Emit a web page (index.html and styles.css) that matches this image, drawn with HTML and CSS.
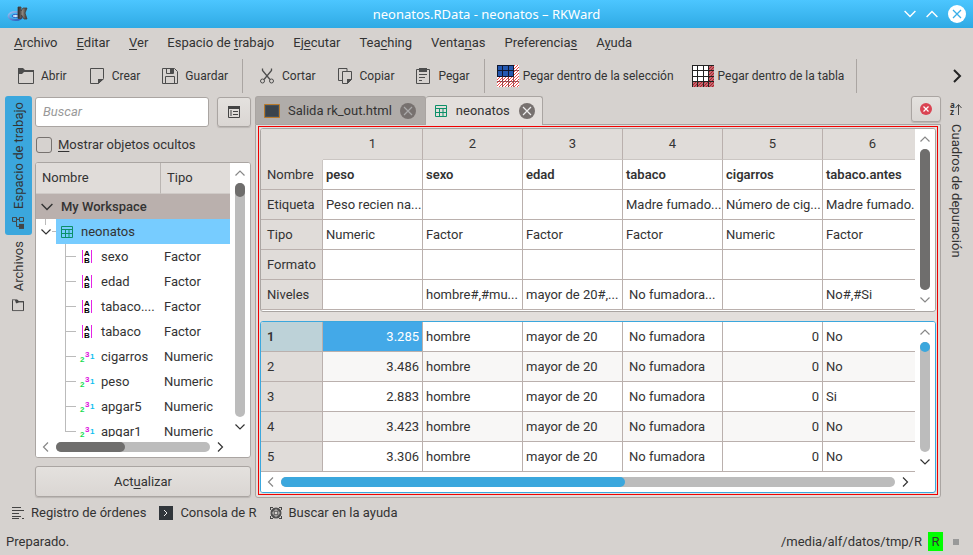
FILE: index.html
```html
<!DOCTYPE html>
<html lang="es">
<head>
<meta charset="utf-8">
<title>neonatos.RData - neonatos – RKWard</title>
<link rel="stylesheet" href="styles.css">
</head>
<body>
<svg class="defs" aria-hidden="true">
  <symbol id="up" viewBox="0 0 10 10"><path d="M.5 7.5L5 3l4.500 4.500" fill="none" stroke="currentColor" stroke-width="1.200"/></symbol>
  <symbol id="down" viewBox="0 0 10 10"><path d="M.5 2.500L5 7l4.500-4.500" fill="none" stroke="currentColor" stroke-width="1.200"/></symbol>
  <symbol id="left" viewBox="0 0 10 10"><path d="M7 .5L2.500 5 7 9.500" fill="none" stroke="currentColor" stroke-width="1.200"/></symbol>
  <symbol id="right" viewBox="0 0 10 10"><path d="M3 .5L7.500 5 3 9.500" fill="none" stroke="currentColor" stroke-width="1.200"/></symbol>
  <symbol id="folder" viewBox="0 0 16 16"><path d="M.5 2v13.500h15V3.500H8" fill="none" stroke="#4d4d4d"/><path d="M0 0h5l2 2h9v2H6L4 6H0z" fill="#4d4d4d"/></symbol>
  <symbol id="new" viewBox="0 0 16 16"><path d="M1.500.5h13v10l-5 5h-8z" fill="none" stroke="#4d4d4d"/><path d="M9 16v-5h6z" fill="#4d4d4d"/></symbol>
  <symbol id="save" viewBox="0 0 16 16"><path d="M.5.500h12l3 3v12H.5zM3.500 15V8.500h9V15M4.500 1v4.500h7V1" fill="none" stroke="#4d4d4d"/><path d="M8 1h3v4H8z" fill="#4d4d4d"/></symbol>
  <symbol id="cut" viewBox="0 0 16 16"><path d="M3.500.5v2L11 11.500M12.500.5v2L5 11.500" fill="none" stroke="#4d4d4d" stroke-width="1.300"/><circle cx="3.500" cy="13" r="2" fill="none" stroke="#4d4d4d"/><circle cx="12.500" cy="13" r="2" fill="none" stroke="#4d4d4d"/></symbol>
  <symbol id="copy" viewBox="0 0 16 16"><path d="M5.500 12.500h-4V.5H10v3M5.500 3.500h9v8l-4 4h-5z" fill="none" stroke="#4d4d4d"/><path d="M10 16v-5h5z" fill="#4d4d4d"/></symbol>
  <symbol id="paste" viewBox="0 0 16 16"><path d="M1.500 1.500h13v14h-13z" fill="none" stroke="#4d4d4d"/><path d="M4 0h8v4H4zM4 6h8v1H4zM4 9h6v1H4zM4 12h3v1H4z" fill="#4d4d4d"/></symbol>
  <symbol id="sheet" viewBox="0 0 12 12"><path d="M.5.5h11v11H.5zM1 3.500h10M1 7.500h10M4.500 3.500v8M8 3.500v8" fill="none" stroke="#0c9069"/></symbol>
  <symbol id="factor" viewBox="0 0 16 16"><path d="M3 1h1v13H3zM12 1h1v13h-1z" fill="#e424e4"/><text x="8" y="7" text-anchor="middle" class="glyph">A</text><text x="8" y="14" text-anchor="middle" class="glyph">B</text></symbol>
  <symbol id="numeric" viewBox="0 0 16 16"><text x="1" y="13" class="glyph green">2</text><text x="6" y="8" class="glyph pink">3</text><text x="11" y="10" class="glyph cyan">1</text></symbol>
  <symbol id="close" viewBox="0 0 16 16"><circle cx="8" cy="8" r="8" fill="#77716f"/><path d="M4 4l8 8M12 4l-8 8" stroke="currentColor" stroke-width="1.200"/></symbol>
  <symbol id="tree" viewBox="0 0 12 12"><path d="M.5.500h4v4h-4zM7.500.500h4v4h-4zM4.500 2.500h3M4.500 4.500v5H7" fill="none" stroke="#444"/><path d="M7 7h5v5H7z" fill="#444"/></symbol>
  <symbol id="files" viewBox="0 0 12 12"><path d="M.5 1v10.500h11V2.500H6" fill="none" stroke="#444"/><path d="M0 0h5l2 2h5v1H7L5 4H4L3 1H0z" fill="#444"/></symbol>
</svg>

<header class="titlebar">
  <svg class="logo" viewBox="0 0 22 16">
    <defs>
      <linearGradient id="disc" x1="0" y1="0" x2="1" y2="1"><stop offset="0" stop-color="#9cc4f2"/><stop offset="1" stop-color="#1d50b8"/></linearGradient>
      <linearGradient id="metal" x1="0" y1="0" x2="1" y2="0"><stop offset="0" stop-color="#222"/><stop offset=".5" stop-color="#8b8580"/><stop offset="1" stop-color="#333"/></linearGradient>
    </defs>
    <ellipse cx="8.500" cy="10" rx="7" ry="4" fill="none" stroke="url(#disc)" stroke-width="2"/><ellipse cx="8.500" cy="10" rx="3.500" ry="1.500" fill="#d5eafc" stroke="#2b5cc0"/><path d="M11 1h3v4l2-3h4l-2 5 2 6h-3l-2.500-4v3.500H11z" fill="url(#metal)" stroke="#48403c" stroke-width=".8"/>
  </svg>
  <h1>neonatos.RData - neonatos – RKWard</h1>
  <div class="window-buttons">
    <button aria-label="Minimizar"><svg class="s12"><use href="#down"/></svg></button>
    <button aria-label="Maximizar"><svg class="s12"><use href="#up"/></svg></button>
    <button aria-label="Cerrar"><svg class="s18" viewBox="0 0 18 18"><circle cx="9" cy="9" r="9" fill="#fff"/><path d="M5 5l8 8M13 5l-8 8" stroke="#38aee8" stroke-width="1.300"/></svg></button>
  </div>
</header>

<nav class="menubar">
  <button><u>A</u>rchivo</button><button><u>E</u>ditar</button><button><u>V</u>er</button><button>Espacio de <u>t</u>rabajo</button><button>Ej<u>e</u>cutar</button><button>Tea<u>c</u>hing</button><button>Venta<u>n</u>as</button><button>Preferencia<u>s</u></button><button>A<u>y</u>uda</button>
</nav>

<div class="toolbar">
  <div class="group">
    <button><svg class="s16"><use href="#folder"/></svg>Abrir</button>
    <button><svg class="s16"><use href="#new"/></svg>Crear</button>
    <button><svg class="s16"><use href="#save"/></svg>Guardar</button>
  </div>
  <div class="group">
    <button><svg class="s16"><use href="#cut"/></svg>Cortar</button>
    <button><svg class="s16"><use href="#copy"/></svg>Copiar</button>
    <button><svg class="s16"><use href="#paste"/></svg>Pegar</button>
  </div>
  <div class="group wide">
    <button><svg class="s22" viewBox="0 0 22 22"><defs><pattern id="hatch" width="3" height="3" patternUnits="userSpaceOnUse"><rect width="3" height="3" fill="#fff"/><path d="M0 3L3 0M-1 1L1 -1M2 4L4 2" stroke="#f04848" stroke-width="1"/></pattern></defs><path d="M0 0h22v22H0z" fill="url(#hatch)"/><path d="M0 0h17v11H0z" fill="#2458b0"/><path d="M0 .5h17M0 5.500h17M0 11.500h17M.5 0v11M5.500 0v11M11.500 0v11M16.500 0v11" stroke="#101830"/><path d="M0 16.500h22M5.500 11v11M11.500 11v11M16.500 11v11M17 5.500h5" stroke="#702028" opacity=".7"/></svg>Pegar dentro de la selección</button>
    <button><svg class="s22" viewBox="0 0 22 22"><defs><pattern id="hatch-dark" width="3" height="3" patternUnits="userSpaceOnUse"><rect width="3" height="3" fill="#c89090"/><path d="M0 3L3 0M-1 1L1 -1M2 4L4 2" stroke="#b01828" stroke-width="1.200"/></pattern></defs><path d="M0 0h22v22H0z" fill="url(#hatch-dark)"/><path d="M0 0h17v17H0z" fill="#fff"/><path d="M0 .5h22M0 5.500h22M0 11.500h22M0 16.500h22M.5 0v22M5.500 0v22M11.500 0v22M16.500 0v22" stroke="#222"/></svg>Pegar dentro de la tabla</button>
  </div>
  <button class="more" aria-label="Más"><svg class="s14" viewBox="0 0 14 14"><path d="M4 1l6 6-6 6" fill="none" stroke="#222" stroke-width="2"/></svg></button>
</div>

<main class="workspace">
  <nav class="side left">
    <button class="active"><svg class="s12"><use href="#tree"/></svg>Espacio de trabajo</button>
    <button><svg class="s12"><use href="#files"/></svg>Archivos</button>
  </nav>

  <aside class="browser">
    <div class="search">
      <input type="text" placeholder="Buscar" aria-label="Buscar">
      <button class="raised" aria-label="Opciones"><svg class="s12" viewBox="0 0 12 12"><path d="M.5.5h11v11H.5zM3 4v6" fill="none" stroke="#444"/><path d="M0 0h12v3H0zM5 5h5v1H5zM5 8h5v1H5z" fill="#444"/></svg></button>
    </div>
    <label class="hidden-toggle"><input type="checkbox"><span><u>M</u>ostrar objetos ocultos</span></label>
    <div class="objects">
      <div class="view">
        <table>
          <colgroup><col class="name"><col></colgroup>
          <thead><tr><th>Nombre</th><th>Tipo</th></tr></thead>
          <tbody>
            <tr class="root"><td colspan="2"><div class="item"><svg class="s12"><use href="#down"/></svg>My Workspace</div></td></tr>
            <tr><td colspan="2"><div class="item object"><span class="expander"><svg class="s10"><use href="#down"/></svg></span><span class="chosen"><svg class="s12"><use href="#sheet"/></svg>neonatos</span></div></td></tr>
            <tr><td><div class="item leaf"><svg class="s16"><use href="#factor"/></svg>sexo</div></td><td>Factor</td></tr>
            <tr><td><div class="item leaf"><svg class="s16"><use href="#factor"/></svg>edad</div></td><td>Factor</td></tr>
            <tr><td><div class="item leaf"><svg class="s16"><use href="#factor"/></svg>tabaco....</div></td><td>Factor</td></tr>
            <tr><td><div class="item leaf"><svg class="s16"><use href="#factor"/></svg>tabaco</div></td><td>Factor</td></tr>
            <tr><td><div class="item leaf"><svg class="s16"><use href="#numeric"/></svg>cigarros</div></td><td>Numeric</td></tr>
            <tr><td><div class="item leaf"><svg class="s16"><use href="#numeric"/></svg>peso</div></td><td>Numeric</td></tr>
            <tr><td><div class="item leaf"><svg class="s16"><use href="#numeric"/></svg>apgar5</div></td><td>Numeric</td></tr>
            <tr><td><div class="item leaf last"><svg class="s16"><use href="#numeric"/></svg>apgar1</div></td><td>Numeric</td></tr>
          </tbody>
        </table>
      </div>
      <div class="scroll vertical"><button class="end" aria-label="Subir"><svg class="s10"><use href="#up"/></svg></button><div class="track"><div class="thumb short"></div></div><button aria-label="Bajar"><svg class="s10"><use href="#down"/></svg></button></div>
      <div class="scroll horizontal"><button class="end" aria-label="Izquierda"><svg class="s10"><use href="#left"/></svg></button><div class="track"><div class="thumb part"></div></div><button aria-label="Derecha"><svg class="s10"><use href="#right"/></svg></button></div>
    </div>
    <button class="raised update">Act<u>u</u>alizar</button>
  </aside>

  <section class="documents">
    <div class="tabs">
      <div class="tab"><svg class="s16" viewBox="0 0 16 16"><path d="M.5 1.500h15v13H.5z" fill="#45505a" stroke="#b97a2b"/><path d="M2 3h12v10H2z" fill="#3a434c"/></svg><a href="#salida">Salida rk_out.html</a><button class="dim" aria-label="Cerrar"><svg class="s16"><use href="#close"/></svg></button></div>
      <div class="tab current"><svg class="s12"><use href="#sheet"/></svg><a href="#neonatos">neonatos</a><button aria-label="Cerrar"><svg class="s16"><use href="#close"/></svg></button></div>
      <button class="raised close-window" aria-label="Cerrar ventana"><svg class="s12" viewBox="0 0 12 12"><circle cx="6" cy="6" r="6" fill="#da4453"/><path d="M3.500 3.500l5 5M8.500 3.500l-5 5" stroke="#fff" stroke-width="1.200"/></svg></button>
    </div>
    <div class="page">
      <div class="editor">
        <div class="grid meta">
          <div class="view">
            <table>
              <colgroup><col class="head"><col span="6" class="var"></colgroup>
              <thead><tr><th></th><th>1</th><th>2</th><th>3</th><th>4</th><th>5</th><th>6</th></tr></thead>
              <tbody>
                <tr class="names"><th>Nombre</th><td>peso</td><td>sexo</td><td>edad</td><td>tabaco</td><td>cigarros</td><td>tabaco.antes</td></tr>
                <tr><th>Etiqueta</th><td>Peso recien na...</td><td></td><td></td><td>Madre fumado...</td><td>Número de cig...</td><td>Madre fumado...</td></tr>
                <tr><th>Tipo</th><td>Numeric</td><td>Factor</td><td>Factor</td><td>Factor</td><td>Numeric</td><td>Factor</td></tr>
                <tr><th>Formato</th><td></td><td></td><td></td><td></td><td></td><td></td></tr>
                <tr><th>Niveles</th><td></td><td>hombre#,#mu...</td><td>mayor de 20#,...</td><td class="spaced">No fumadora...</td><td></td><td>No#,#Si</td></tr>
              </tbody>
            </table>
          </div>
          <div class="scroll vertical"><button class="end" aria-label="Subir"><svg class="s10"><use href="#up"/></svg></button><div class="track"><div class="thumb full"></div></div><button class="end" aria-label="Bajar"><svg class="s10"><use href="#down"/></svg></button></div>
        </div>
        <div class="grid data">
          <div class="view">
            <table>
              <colgroup><col class="head"><col span="6" class="var"></colgroup>
              <tbody>
                <tr class="first"><th>1</th><td class="num selected">3.285</td><td>hombre</td><td>mayor de 20</td><td class="spaced">No fumadora</td><td class="num">0</td><td>No</td></tr>
                <tr><th>2</th><td class="num">3.486</td><td>hombre</td><td>mayor de 20</td><td class="spaced">No fumadora</td><td class="num">0</td><td>No</td></tr>
                <tr><th>3</th><td class="num">2.883</td><td>hombre</td><td>mayor de 20</td><td class="spaced">No fumadora</td><td class="num">0</td><td>Si</td></tr>
                <tr><th>4</th><td class="num">3.423</td><td>hombre</td><td>mayor de 20</td><td class="spaced">No fumadora</td><td class="num">0</td><td>No</td></tr>
                <tr><th>5</th><td class="num">3.306</td><td>hombre</td><td>mayor de 20</td><td class="spaced">No fumadora</td><td class="num">0</td><td>No</td></tr>
              </tbody>
            </table>
          </div>
          <div class="scroll vertical"><button class="end" aria-label="Subir"><svg class="s10"><use href="#up"/></svg></button><div class="track"><div class="thumb dot"></div></div><button aria-label="Bajar"><svg class="s10"><use href="#down"/></svg></button></div>
          <div class="scroll horizontal"><button class="end" aria-label="Izquierda"><svg class="s10"><use href="#left"/></svg></button><div class="track"><div class="thumb half"></div></div><button aria-label="Derecha"><svg class="s10"><use href="#right"/></svg></button></div>
        </div>
      </div>
    </div>
  </section>

  <nav class="side right">
    <button><svg class="s14" viewBox="0 0 14 14"><text x="1" y="6" class="sort">a</text><text x="1" y="13" class="sort">z</text><path d="M9.500 13V3M6.500 6l3-3.500 3 3.500" fill="none" stroke="#444"/></svg>Cuadros de depuración</button>
  </nav>
</main>

<nav class="tools">
  <button><svg class="s12" viewBox="0 0 12 12"><path d="M0 0h9v1H0zM0 3h12v1H0zM0 6h7v1H0zM0 9h9v1H0zM0 11h7v1H0zM10 11h2v1h-2z" fill="#444"/></svg>Registro de órdenes</button>
  <button><svg class="s14" viewBox="0 0 14 14"><path d="M0 0h14v14H0z" fill="#31363b"/><path d="M5 4l3 3-3 3" fill="none" stroke="#eee"/></svg>Consola de R</button>
  <button><svg class="s12" viewBox="0 0 12 12"><circle cx="6" cy="6" r="4.500" fill="none" stroke="#555" stroke-width="2"/><circle cx="6" cy="6" r="2" fill="none" stroke="#444"/><path d="M0 .5h3M9 .5h3M0 11.500h3M9 11.500h3M.5 0v3M11.500 0v3M.5 9v3M11.500 9v3M4 1v3M8 1v3M4 8v3M8 8v3M1 4h3M8 4h3M1 8h3M8 8h3" stroke="#444"/></svg>Buscar en la ayuda</button>
</nav>
<footer class="status"><span>Preparado.</span><span class="path">/media/alf/datos/tmp/R</span><span class="engine">R</span><span class="grip"></span></footer>
</body>
</html>
```
FILE: styles.css
```css
* { box-sizing: border-box; }
body {
  margin: 0;
  height: 100vh;
  overflow: hidden;
  display: flex;
  flex-direction: column;
  background: #d6d2cf;
  color: #333;
  font: 13px/20px Roboto, sans-serif;
}
button, input { font: inherit; color: inherit; }
button { margin: 0; padding: 0; border: 0; background: none; white-space: nowrap; }
a { color: inherit; text-decoration: none; }
u { text-underline-offset: 2px; }
svg { display: block; flex: none; writing-mode: horizontal-tb; }
.defs { display: none; }
.s10 { width: 10px; height: 10px; }
.s12 { width: 12px; height: 12px; }
.s14 { width: 14px; height: 14px; }
.s16 { width: 16px; height: 16px; }
.s18 { width: 18px; height: 18px; }
.s22 { width: 22px; height: 22px; }
.glyph { font: bold 8px "Liberation Sans", sans-serif; fill: #000; }
.green { fill: #18dc50; }
.pink { fill: #e010e0; }
.cyan { fill: #10c0f0; }
.sort { font: bold 8px "Noto Sans", sans-serif; fill: #333; }

.titlebar {
  flex: none;
  height: 28px;
  display: grid;
  grid-template-columns: 80px 1fr 80px;
  align-items: center;
  padding: 0 7px;
  background: linear-gradient(#4cc6ff, #2faae4);
  color: #fff;
}
.titlebar h1 { margin: 0; font: 13px/20px "Noto Sans", sans-serif; text-align: center; }
.logo { width: 22px; height: 16px; }
.window-buttons { display: flex; justify-content: flex-end; align-items: center; gap: 10px; }

.menubar { flex: none; height: 29px; display: flex; align-items: center; gap: 19px; padding-left: 14px; }

.toolbar { flex: none; height: 38px; display: flex; align-items: center; }
.group { display: flex; align-items: center; gap: 22px; height: 34px; padding: 0 14px 0 18px; border-right: 1px solid #aaa5a2; }
.group + .group { gap: 21px; padding-left: 16px; }
.toolbar button { display: flex; align-items: center; gap: 7px; font-size: 12px; }
.toolbar .group.wide { gap: 18px; padding: 0 12px; }
.toolbar .wide button { gap: 4px; }
.toolbar .more { margin-left: auto; padding-right: 9px; }

.workspace { flex: 1; min-height: 0; display: flex; }
.side { flex: none; width: 32px; padding-top: 1px; display: flex; flex-direction: column; }
.side button { display: flex; align-items: center; gap: 8px; writing-mode: vertical-rl; }
.left { padding-left: 5px; }
.left button { width: 27px; padding: 6px 4px; transform: rotate(180deg); }
.left svg { transform: rotate(180deg); }
.left .active { background: #3ba7dd; border-radius: 3px; }
.right button { width: 30px; padding: 6px 5px; }

.browser { flex: none; width: 219px; padding: 2px 0 1px 3px; display: flex; flex-direction: column; }
.search { display: flex; gap: 8px; height: 30px; }
.search input { flex: 1; min-width: 0; padding: 0 7px; border: 1px solid #aaa5a2; border-radius: 3px; background: #fff; }
.search input::placeholder { color: #999; font-style: italic; }
.raised { display: flex; align-items: center; justify-content: center; border: 1px solid #aaa5a2; border-radius: 3px; background: linear-gradient(#e4e1de, #dad6d3); box-shadow: 0 1px 1px #bbb6b3; }
.search .raised { width: 34px; }
.hidden-toggle { display: flex; align-items: center; gap: 6px; height: 35px; }
.hidden-toggle input { appearance: none; width: 16px; height: 16px; margin: 0 0 0 1px; border: 1px solid #77726f; border-radius: 3px; }
.objects { flex: 1; min-height: 0; display: grid; grid-template-columns: 1fr 20px; grid-template-rows: 1fr 20px; border: 1px solid #aaa5a2; border-radius: 3px; background: #fff; overflow: hidden; }
.view { min-width: 0; min-height: 0; overflow: hidden; }
table { border-collapse: separate; border-spacing: 0; table-layout: fixed; width: 100%; }
th, td { padding: 0 3px; font-weight: 400; text-align: left; white-space: nowrap; overflow: hidden; }
.objects th { height: 31px; padding: 0 6px; background: #e0dcd9; border-right: 1px solid #bab5b2; border-bottom: 1px solid #cfcac7; }
.objects th:last-child { border-right: 0; }
.objects td { height: 25px; padding-left: 3px; }
.objects .name { width: 125px; }
.objects td:first-child { padding: 0; }
.item { display: flex; align-items: center; height: 25px; }
.root .item { gap: 8px; padding-left: 5px; background: #bab0ad; font-weight: 500; }
.expander { display: flex; align-items: center; width: 20px; height: 25px; padding-left: 5px; background: linear-gradient(#bbb, #bbb) 9px 0 / 1px 6px no-repeat, linear-gradient(#bbb, #bbb) 16px 12px / 4px 1px no-repeat; }
.chosen { flex: 1; display: flex; align-items: center; gap: 8px; height: 25px; padding-left: 5px; background: #77ccff; }
.leaf { gap: 6px; padding-left: 43px; background: linear-gradient(#bbb, #bbb) 29px 0 / 1px 25px no-repeat, linear-gradient(#bbb, #bbb) 29px 12px / 11px 1px no-repeat; }
.leaf.last { background-size: 1px 13px, 11px 1px; }
.update { flex: none; height: 31px; margin-top: 8px; }

.scroll { display: flex; align-items: center; background: #fff; }
.vertical { flex-direction: column; }
.scroll button { flex: none; width: 20px; height: 20px; display: flex; align-items: center; justify-content: center; color: #333; }
.scroll .end { color: #888; }
.track { flex: 1; border-radius: 5px; background: #bcbcbc; }
.vertical .track { width: 10px; }
.horizontal .track { height: 10px; }
.thumb { height: 10px; border-radius: 5px; background: #6f6e6d; }
.thumb.short { height: 14px; }
.thumb.part { width: 45%; }
.thumb.full { height: 100%; }
.data .thumb { background: #3ba7dd; }
.thumb.half { width: 56%; }

.documents { flex: 1; min-width: 0; display: flex; flex-direction: column; padding: 1px 0 0 4px; }
.tabs { flex: none; display: flex; height: 28px; }
.tab { display: flex; align-items: center; gap: 8px; padding: 0 9px 0 8px; background: #b0aca9; border: 1px solid #aaa5a2; border-bottom: 0; border-radius: 3px 3px 0 0; }
.tab.current { gap: 9px; padding: 0 7px 0 9px; margin-bottom: -1px; background: #e3dfdc; border-left: 0; z-index: 1; }
.tab button { color: #eee; }
.tab .dim { color: #aaa; }
.close-window { width: 30px; height: 26px; margin-left: auto; }
.page { flex: 1; min-height: 0; display: flex; padding: 1px 2px 2px; border: 1px solid #aaa5a2; border-radius: 0 0 3px 3px; background: #e3dfdc; }
.editor { flex: 1; min-width: 0; display: flex; flex-direction: column; gap: 9px; padding: 1px; border: 1px solid #f00000; }
.grid { display: grid; grid-template-columns: 1fr 20px; min-width: 0; border: 1px solid #aaa5a2; border-radius: 3px; background: #fff; overflow: hidden; }
.meta { flex: none; padding-bottom: 1px; }
.data { flex: 1; min-height: 0; grid-template-rows: 1fr 20px; border-color: #3ba7dd; }
.grid table { width: 662px; }
.grid .head { width: 62px; }
.grid .var { width: 100px; }
.grid th, .grid td { height: 30px; border-right: 1px solid #bab0ad; border-bottom: 1px solid #bab0ad; }
.grid th { padding-left: 6px; background: #e0dcd9; }
.grid thead th { height: 31px; padding: 0; text-align: center; border-bottom-color: #cbc6c3; }
.grid thead th:first-child, .meta tbody tr:first-child th { border-color: #e0dcd9 #cbc6c3 #bab0ad #e0dcd9; }
.grid thead th:first-child { border-color: #e0dcd9; }
.names td { font-weight: 600; }
.grid td.spaced { padding-left: 6px; }
.grid td.num { text-align: right; }
.data tr:nth-child(even) td { background: #f8f7f6; }
.data .first th { background: #bdd2d8; font-weight: 600; }
.data td.selected { background: #43a9e8; color: #fff; }

.tools { flex: none; height: 30px; display: flex; align-items: center; gap: 13px; padding-left: 12px; }
.tools button { display: flex; align-items: center; gap: 7px; }
.status { flex: none; height: 27px; display: flex; align-items: center; padding: 0 14px 0 6px; }
.path { margin-left: auto; }
.engine { width: 15px; height: 19px; margin: 0 10px 0 6px; background: #00ff00; text-align: center; }
.grip { width: 6px; height: 6px; background: #999; }
```
